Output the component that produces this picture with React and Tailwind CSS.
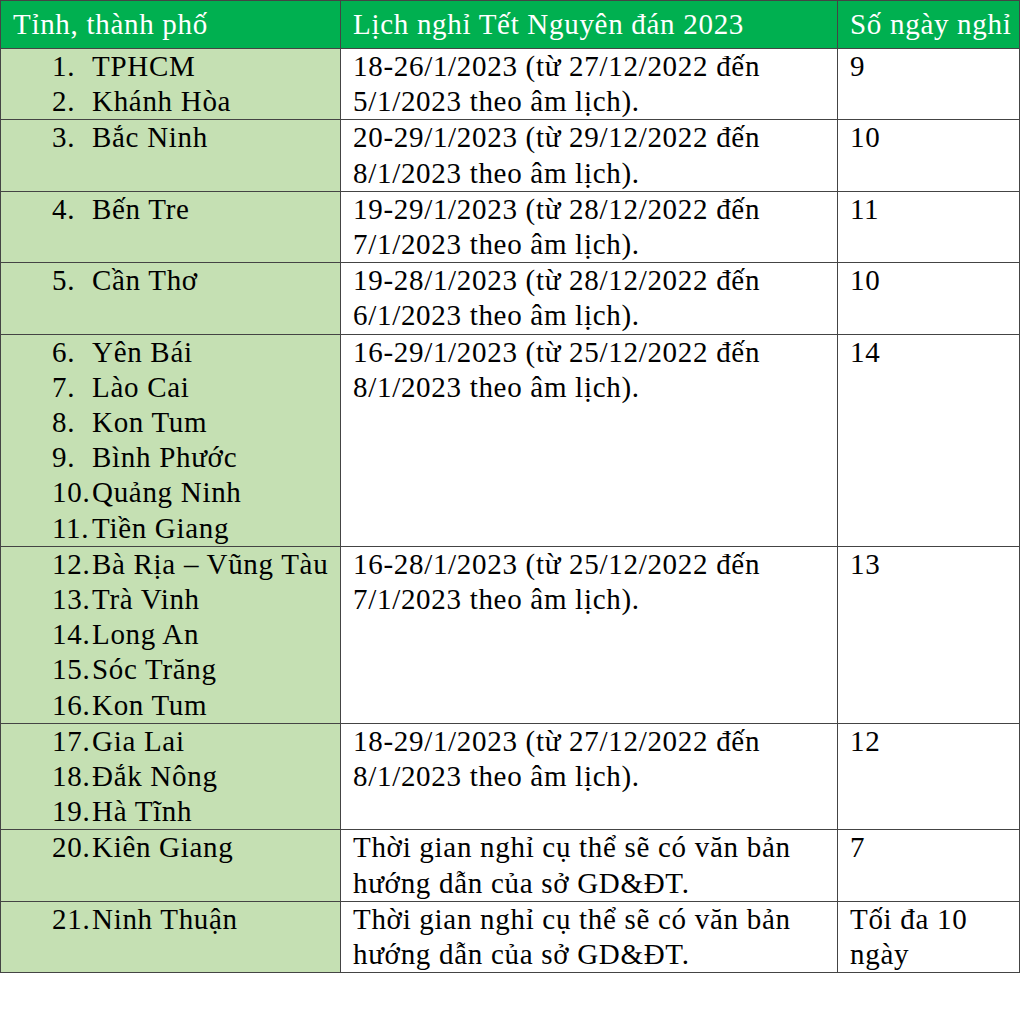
const rows = [
  {
    places: [[1, 'TPHCM'], [2, 'Khánh Hòa']],
    dates: '18-26/1/2023 (từ 27/12/2022 đến 5/1/2023 theo âm lịch).',
    days: '9',
  },
  {
    places: [[3, 'Bắc Ninh']],
    dates: '20-29/1/2023 (từ 29/12/2022 đến 8/1/2023 theo âm lịch).',
    days: '10',
  },
  {
    places: [[4, 'Bến Tre']],
    dates: '19-29/1/2023 (từ 28/12/2022 đến 7/1/2023 theo âm lịch).',
    days: '11',
  },
  {
    places: [[5, 'Cần Thơ']],
    dates: '19-28/1/2023 (từ 28/12/2022 đến 6/1/2023 theo âm lịch).',
    days: '10',
  },
  {
    places: [[6, 'Yên Bái'], [7, 'Lào Cai'], [8, 'Kon Tum'], [9, 'Bình Phước'], [10, 'Quảng Ninh'], [11, 'Tiền Giang']],
    dates: '16-29/1/2023 (từ 25/12/2022 đến 8/1/2023 theo âm lịch).',
    days: '14',
  },
  {
    places: [[12, 'Bà Rịa – Vũng Tàu'], [13, 'Trà Vinh'], [14, 'Long An'], [15, 'Sóc Trăng'], [16, 'Kon Tum']],
    dates: '16-28/1/2023 (từ 25/12/2022 đến 7/1/2023 theo âm lịch).',
    days: '13',
  },
  {
    places: [[17, 'Gia Lai'], [18, 'Đắk Nông'], [19, 'Hà Tĩnh']],
    dates: '18-29/1/2023 (từ 27/12/2022 đến 8/1/2023 theo âm lịch).',
    days: '12',
  },
  {
    places: [[20, 'Kiên Giang']],
    dates: 'Thời gian nghỉ cụ thể sẽ có văn bản hướng dẫn của sở GD&ĐT.',
    days: '7',
  },
  {
    places: [[21, 'Ninh Thuận']],
    dates: 'Thời gian nghỉ cụ thể sẽ có văn bản hướng dẫn của sở GD&ĐT.',
    days: 'Tối đa 10 ngày',
  },
]

export default function App() {
  return (
    <div className="min-h-[1024px] bg-white font-['Liberation_Serif','Times_New_Roman',serif] text-[29px] leading-[35.2px] tracking-[0.7px] text-black">
      <table className="w-[1019px] table-fixed border-collapse">
        <colgroup>
          <col className="w-[340px]" />
          <col className="w-[497px]" />
          <col className="w-[182px]" />
        </colgroup>
        <thead>
          <tr className="bg-[#00b050] text-white">
            <th className="h-[48px] whitespace-nowrap border border-[#444] px-3 text-left font-normal">Tỉnh, thành phố</th>
            <th className="whitespace-nowrap border border-[#444] px-3 text-left font-normal">Lịch nghỉ Tết Nguyên đán 2023</th>
            <th className="whitespace-nowrap border border-[#444] pl-3 pr-0 text-left font-normal">Số ngày nghỉ</th>
          </tr>
        </thead>
        <tbody>
          {rows.map((row, i) => (
            <tr key={i}>
              <td className="border border-[#444] bg-[#c5e0b3] p-0 pl-[51px] align-top">
                {row.places.map(([n, name]) => (
                  <div key={n} className="flex">
                    <span className="w-[40px] shrink-0 whitespace-nowrap">{n}.</span>
                    <span className="whitespace-nowrap">{name}</span>
                  </div>
                ))}
              </td>
              <td className="border border-[#444] px-3 py-0 align-top">{row.dates}</td>
              <td className="border border-[#444] px-3 py-0 align-top">{row.days}</td>
            </tr>
          ))}
        </tbody>
      </table>
    </div>
  )
}
